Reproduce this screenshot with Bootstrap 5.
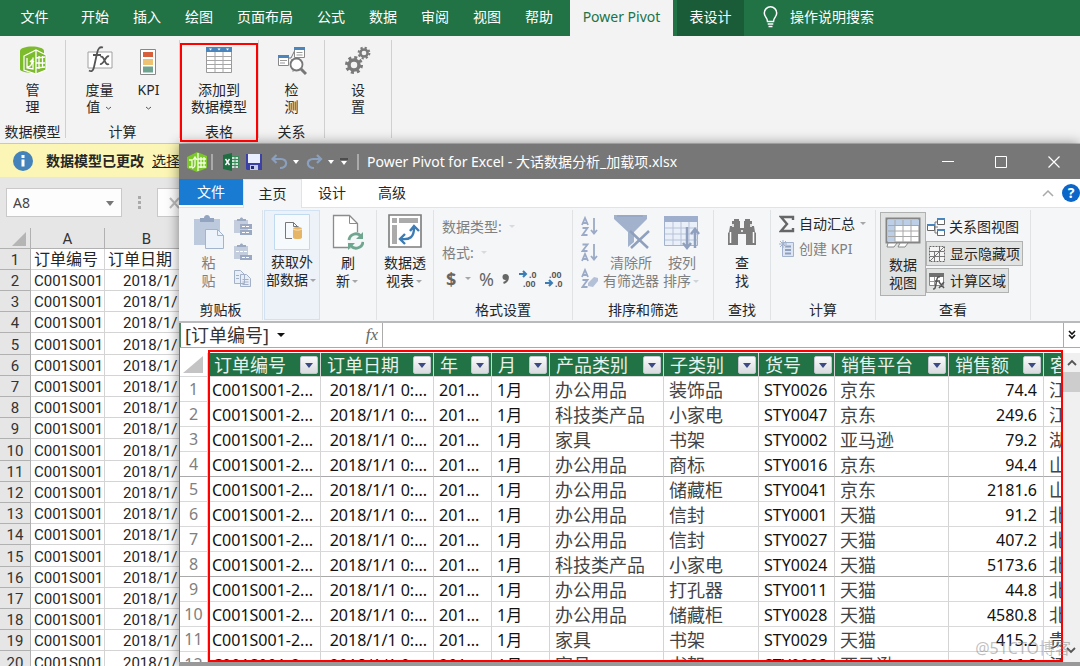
<!DOCTYPE html>
<html lang="zh-CN">
<head>
<meta charset="utf-8">
<meta name="viewport" content="width=device-width, initial-scale=1">
<title>Power Pivot for Excel</title>
<link href="https://cdn.jsdelivr.net/npm/bootstrap@5.3.0/dist/css/bootstrap.min.css" rel="stylesheet">
<style>
  body { font: 14px/18px "Noto Sans", "Noto Sans CJK SC", sans-serif; color: #262626; background: #e6e6e6; }
  button { font: inherit; color: inherit; background: none; border: 0; padding: 0; }
  button, a, .nowrap { white-space: nowrap; }
  svg { display: block; flex: none; }
  .xl-tabs { background: #217346; height: 36px; color: #fff; }
  .xl-tabs button { padding: 0 12px 2px; }
  .xl-tabs .xl-file { width: 69px; }
  .xl-tabs .xl-on { background: #f3f3f3; color: #217346; width: 103px; margin: 0 4px 0 5px; }
  .xl-tabs .xl-ctx { background: #1b5c38; width: 67px; }
  .xl-ribbon { background: #f3f3f3; height: 108px; border-bottom: 1px solid #c8c8c8; }
  .xl-group { border-right: 1px solid #d0d0d0; height: 98px; margin-top: 4px; position: relative; text-align: center; }
  .xl-group button { line-height: 17px; }
  .xl-group button svg { margin: 4px auto 5px; }
  .xl-group .xl-label { line-height: 18px; margin-bottom: -3px; }
  .frame-red { position: absolute; inset: 3px 0 -4px 0; border: 2px solid #f00; z-index: 5; pointer-events: none; }
  .work { min-height: 0; }
  .sheet { width: 179px; }
  .msg { background: #fbf6b5; height: 33px; padding-left: 13px; }
  .msg strong { margin: 0 8px 0 13px; }
  .namebox { height: 51px; padding-left: 6px; }
  .namebox .box { background: #fdfdfd; border: 1px solid #c9c9c9; height: 29px; }
  .namebox input { width: 92px; border: 0; background: none; color: #444; }
  .sheet-table { table-layout: fixed; width: 189px; border-collapse: separate; border-spacing: 0; font: 15px/18px Roboto, "Noto Sans CJK SC", sans-serif; }
  .sheet-table th, .sheet-table td { padding: 2px 0 0; overflow: hidden; white-space: nowrap; height: 21px; border-right: 1px solid #d4d4d4; border-bottom: 1px solid #d4d4d4; }
  .sheet-table tbody tr:nth-child(5n) > * { height: 22px; }
  .sheet-table th { background: #e6e6e6; font-weight: 400; text-align: center; border-color: #b1b1b1; color: #333; }
  .sheet-table td { background: #fff; padding-left: 3px; }
  .sheet-table td + td { padding-left: 18px; }
  .sheet-table tr:first-child td { font-size: 16px; padding-left: 3px; }
  .pp { box-shadow: 0 0 12px rgba(0,0,0,.45); position: relative; z-index: 2; min-width: 0; padding-bottom: 4px; background: #999; }
  .pp-title { background: #777; color: #fff; height: 35px; }
  .pp-name { margin-left: 8px; }
  .bar-sep { width: 2px; height: 16px; background: #aaa; }
  .win-btn { width: 53px; }
  .pp-tabs { background: #fff; height: 29px; border-bottom: 1px solid #e1e3e6; }
  .pp-tabs button { width: 60px; }
  .pp-tabs .pp-file { background: #197cd2; color: #fff; width: 64px; height: 26px; }
  .pp-tabs .pp-on { background: #f4f6f8; border: 1px solid #e1e3e6; border-bottom: 0; width: 59px; height: 29px; }
  .pp-ribbon { background: #f4f6f8; height: 115px; border-bottom: 2px solid #b8babc; padding-top: 2px; }
  .pp-group { border-right: 1px solid #e0e3e6; height: 110px; }
  .pp-group .pp-body { height: 91px; padding-top: 4px; }
  .pp-group .big svg { margin: 0 auto; }
  .big { text-align: center; align-self: flex-start; }
  .big .ico { height: 40px; }
  .off { color: #808080; }
  .hot { background: #edf2f8; border: 1px solid #d0e2f3; width: 56px; height: 110px; margin-left: 1px; padding-top: 2px; }
  .hot .ico svg { margin-top: -3px; }
  .toggled { background: #e1e3e3; border: 1px solid #b0b2b2; }
  .view-big { width: 46px; height: 84px; margin-top: -2px; }
  .view-row { height: 25px; padding: 0 2px 0 1px; }
  .stack > * { height: 26px; }
  .pp-fx { background: #fff; height: 25px; border-bottom: 1px solid #ababab; border-left: 2px solid #4b8763; }
  .pp-fx .field { width: 202px; border-right: 1px solid #ababab; }
  .pp-fx .field .nowrap { font-size: 18px; color: #333; }
  .pp-fx input { border: 0; outline: 0; min-width: 0; }
  .fx { font: italic 17px/22px "Liberation Serif", serif; color: #666; }
  .pp-more { width: 17px; border-left: 1px solid #ababab; }
  .pp-data { background: #fff; min-height: 0; padding-top: 5px; border-left: 1px solid #4b8763; position: relative; }
  .data-table { table-layout: fixed; width: 100%; border-collapse: separate; border-spacing: 0; font: 16px/22px "Noto Sans", "Noto Sans CJK SC", sans-serif; color: #111; }
  .data-table th, .data-table td { padding: 1px 4px 0 5px; height: 25px; overflow: hidden; white-space: nowrap; border-right: 1px solid #d4d4d4; border-bottom: 1px solid #d9d9d9; }
  .data-table td:nth-child(2) { padding-left: 4px; }
  .data-table tbody tr:nth-child(4n) > * { border-bottom: 1px solid #aaa; }
  .data-table thead th { background: #217346; color: #e9f1ec; height: 24px; font-weight: 400; font-size: 18px; padding: 0 2px 0 6px; }
  .data-table .rownum { background: #fff; color: #808080; font-weight: 400; text-align: center; padding: 0; }
  .data-table .zh { font-size: 18px; color: #444; }
  .data-table .num { text-align: right; padding-right: 6px; }
  .filter-btn { width: 18px; height: 18px; background: linear-gradient(#fafafa, #d9dbe0); border: 1px solid #c3c6cf; border-radius: 2px; }
  .frame-data { position: absolute; left: 28px; right: 17px; top: 2px; bottom: 0; border: 2px solid #f00; pointer-events: none; }
  .vscroll { width: 17px; background: #f0f0f0; }
  .vscroll .thumb { height: 20px; background: #cdcdcd; }
  .watermark { position: absolute; right: 9px; bottom: 5px; font-size: 16px; color: rgba(130,130,130,.5); }
</style>
</head>
<body class="vh-100 overflow-hidden d-flex flex-column">

<nav class="xl-tabs d-flex flex-shrink-0 align-items-stretch">
  <button class="xl-file">文件</button><button>开始</button><button>插入</button><button>绘图</button><button>页面布局</button><button>公式</button><button>数据</button><button>审阅</button><button>视图</button><button>帮助</button>
  <button class="xl-on">Power Pivot</button>
  <button class="xl-ctx">表设计</button>
  <button class="d-flex align-items-center gap-2 ms-1">
    <svg width="22" height="24" viewBox="0 0 22 24" fill="none" stroke="#fff" stroke-width="1.5"><path d="M7.500 16.500c0-4-3.200-4.200-3.200-8.500a6 6 0 0 1 12.400 0c0 4.300-3.200 4.500-3.200 8.500zM7.700 19h5.600M8.500 21.500h4"/></svg>
    操作说明搜索</button>
</nav>

<header class="xl-ribbon d-flex flex-shrink-0">
  <div class="xl-group d-flex flex-column justify-content-between" style="width:66px">
    <button><svg width="28" height="32" viewBox="0 0 28 32"><path d="M1 7c0-6 24-6 24 0v18c0 5-24 5-24 0z" fill="#7cbb2b"/><path d="M5 12l12-6 10 5v15l-10 4-12-4z" fill="#7cbb2b" stroke="#fff" stroke-width="1.200"/><path d="M17 6v24M20 12v13M23.500 12v12M17 14l9-1M17 19h9M17 24l9-1" stroke="#fff" fill="none" stroke-width="1.300"/><path d="M8 14v10l6 1V13.500M8 23c4 0 5-2 5-6m-2 1l2-2 2 2" stroke="#fff" fill="none" stroke-width="1.300"/></svg>管<br>理</button>
    <div class="xl-label nowrap">数据模型</div>
  </div>
  <div class="xl-group d-flex flex-column justify-content-between" style="width:114px">
    <div class="d-flex justify-content-center gap-4">
      <button><svg width="28" height="32" viewBox="0 0 28 32"><path d="M2 8h24v16H2z" fill="#fff" stroke="#a0a0a0"/><path d="M17 3.500c-3.500-1-5 1-6 6L8 23c-.8 4-2.500 5-5 3.500M7 11h8" fill="none" stroke="#555" stroke-width="1.800"/><path d="M14.500 13c4-2.500 4 9.500 8.500 7M23 12.500c-3-2-5 8.500-9 7.500" fill="none" stroke="#555" stroke-width="1.800"/></svg>度量<br>值 <svg class="d-inline m-0" width="9" height="8" viewBox="0 0 9 8"><path d="M2 3l2.500 2L7 3" fill="none" stroke="#555"/></svg></button>
      <button><svg width="18" height="32" viewBox="0 0 18 32"><path d="M1.500 5.500h15v25h-15z" fill="#fff" stroke="#888"/><path d="M4 8h10v5H4z" fill="#d65f3c"/><path d="M4 15h10v6H4z" fill="#edc373"/><path d="M4 22.500h10v6H4z" fill="#6ea390"/></svg>KPI<br><svg class="d-inline m-0" width="9" height="8" viewBox="0 0 9 8"><path d="M2 3l2.500 2L7 3" fill="none" stroke="#555"/></svg></button>
    </div>
    <div class="xl-label">计算</div>
  </div>
  <div class="xl-group d-flex flex-column justify-content-between" style="width:79px">
    <button><svg width="28" height="32" viewBox="0 0 28 32"><path d="M1.500 4.500h25v24h-25z" fill="#fff" stroke="#9a9a9a"/><path d="M1 3h26v5H1z" fill="#4a86bd"/><path d="M4 4.500h3l-1.500 2zM12.500 4.500h3l-1.500 2zM21 4.500h3l-1.500 2z" fill="#fff"/><path d="M2 12.500h24M2 16.500h24M2 20.500h24M2 24.500h24M10 8v20M18 8v20" stroke="#a6a6a6"/></svg>添加到<br>数据模型</button>
    <div class="xl-label">表格</div>
    <span class="frame-red"></span>
  </div>
  <div class="xl-group d-flex flex-column justify-content-between" style="width:66px">
    <button><svg width="30" height="32" viewBox="0 0 30 32"><path d="M11 14h3l4-8M14 16h6" stroke="#777" fill="none"/><path d="M1.500 11.500h10v10h-10zM17.500 3.500h10v10h-10z" fill="#fff" stroke="#888"/><path d="M1 11h11v3H1zM17 3h11v3H17z" fill="#4a86bd"/><path d="M3 16.500h7M3 19h5M19.500 8.500h6M19.500 11h6" stroke="#999"/><path d="M16 28v-8h9" stroke="#999" fill="none"/><circle cx="19.500" cy="20.500" r="6" fill="#fff" stroke="#777" stroke-width="1.800"/><path d="M24 25l5 5" stroke="#777" stroke-width="3"/></svg>检<br>测</button>
    <div class="xl-label">关系</div>
  </div>
  <div class="xl-group d-flex flex-column" style="width:67px">
    <button><svg width="28" height="32" viewBox="0 0 28 32" fill="none" stroke="#7a7a7a"><circle cx="10" cy="21" r="5" stroke-width="3.500"/><circle cx="10" cy="21" r="7.500" stroke-width="3" stroke-dasharray="3 2.890"/><circle cx="20" cy="9" r="3.600" stroke-width="2.500"/><circle cx="20" cy="9" r="5.400" stroke-width="2" stroke-dasharray="2.200 2.040"/></svg>设<br>置</button>
  </div>
</header>

<main class="work d-flex flex-grow-1">
  <section class="sheet flex-shrink-0 overflow-hidden">
    <div class="msg d-flex align-items-center">
      <svg width="20" height="20" viewBox="0 0 20 20"><circle cx="10" cy="10" r="10" fill="#4382ba"/><path d="M8.500 8.500h3v7h-3zM8.500 4h3v3h-3z" fill="#fff"/></svg>
      <strong class="nowrap">数据模型已更改</strong>
      <a href="#" class="text-reset">选择</a>
    </div>
    <div class="namebox d-flex align-items-center">
      <div class="box d-flex align-items-center px-1">
        <input aria-label="名称框" value="A8">
        <svg width="14" height="10" viewBox="0 0 14 10"><path d="M3 3h8l-4 5z" fill="#777"/></svg>
      </div>
      <svg class="mx-3" width="3" height="14" viewBox="0 0 3 14" fill="#aaa"><path d="M0 0h3v3H0zM0 5h3v3H0zM0 10h3v3H0z"/></svg>
      <div class="box flex-grow-1 border-end-0 d-flex align-items-center justify-content-end"><svg width="10" height="14" viewBox="0 0 10 14"><path d="M1 2l9 10M1 12l9-10" stroke="#bbb" stroke-width="2"/></svg></div>
    </div>
    <table class="sheet-table">
      <colgroup><col style="width:31px"><col style="width:74px"><col></colgroup>
      <thead><tr><th><svg class="ms-auto me-1" width="14" height="14" viewBox="0 0 14 14"><path d="M14 0v14H0z" fill="#b5b5b5"/></svg></th><th>A</th><th>B</th></tr></thead>
      <tbody id="sheetRows"></tbody>
    </table>
  </section>

  <section class="pp flex-grow-1 d-flex flex-column">
    <div class="pp-title d-flex align-items-center flex-shrink-0">
      <svg class="ms-2" width="20" height="20" viewBox="0 0 20 20"><path d="M0 5l10-5 10 4v12l-10 4L0 16z" fill="#7cc729"/><path d="M11 1v18M14 5v11M17 5v10M11 7h8M11 11h8M11 15h8M2 8h3v7H2M8 5v8c0 2-2 3-3 3M6 8l2-3 2 3" stroke="#f2ffe0" fill="none" stroke-width="1.300"/></svg>
      <span class="bar-sep ms-1"></span>
      <svg class="ms-2" width="20" height="18" viewBox="0 0 20 18"><path d="M8 3h10v12H8z" fill="#3c8a5c"/><path d="M11 5h6M11 8h6M11 11h6M11 14h6" stroke="#fff" stroke-width="1.500" stroke-dasharray="2.500 1"/><path d="M2 2l9-2v18l-9-2z" fill="#1d6e40"/><path d="M4.500 6l4 6M8.500 6l-4 6" stroke="#fff" stroke-width="1.400"/></svg>
      <svg class="ms-1" width="18" height="18" viewBox="0 0 18 18"><path d="M1 1h16v16H2l-1-1z" fill="#3c41a5"/><path d="M3 1h12v9H3z" fill="#e9efff"/><path d="M5 12h8v5H5z" fill="#c5cbea"/><path d="M6 13h3v3H6z" fill="#222a70"/></svg>
      <button class="d-flex align-items-center ms-2" aria-label="撤消"><svg width="17" height="16" viewBox="0 0 17 16"><path d="M5.500 1L1.500 5l4 4M2 5h8c7 0 7 9-1 9" fill="none" stroke="#8ba0be" stroke-width="2.200"/></svg><svg class="ms-1" width="8" height="6" viewBox="0 0 8 6"><path d="M1 1h6L4 5z" fill="#fff"/></svg></button>
      <button class="d-flex align-items-center ms-1" aria-label="恢复"><svg width="19" height="16" viewBox="1 0 19 16"><path d="M14 1l4 4-4 4M18 5h-8c-7 0-7 9 1 9" fill="none" stroke="#8ba0be" stroke-width="2.200"/></svg><svg class="ms-1" width="8" height="6" viewBox="0 0 8 6"><path d="M1 1h6L4 5z" fill="#fff"/></svg></button>
      <svg class="ms-1 me-2" width="10" height="8" viewBox="0 0 10 8"><path d="M1 1h8" stroke="#222"/><path d="M2 3h6L5 7z" fill="#fff"/></svg>
      <span class="bar-sep"></span>
      <span class="nowrap pp-name">Power Pivot for Excel - 大话数据分析_加载项.xlsx</span>
      <div class="ms-auto d-flex">
        <button class="win-btn" aria-label="最小化"><svg class="mx-auto" width="12" height="12" viewBox="0 0 12 12"><path d="M0 5.500h12" stroke="#fff"/></svg></button>
        <button class="win-btn" aria-label="最大化"><svg class="mx-auto" width="12" height="12" viewBox="0 0 12 12"><path d="M.5.500h11v11H.5z" fill="none" stroke="#fff"/></svg></button>
        <button class="win-btn" aria-label="关闭"><svg class="mx-auto" width="12" height="12" viewBox="0 0 12 12"><path d="M.5.500l11 11M11.500.500l-11 11" stroke="#fff" stroke-width="1.200"/></svg></button>
      </div>
    </div>

    <nav class="pp-tabs d-flex flex-shrink-0 align-items-start">
      <button class="pp-file">文件</button><button class="pp-on">主页</button><button class="h-100">设计</button><button class="h-100">高级</button>
      <div class="ms-auto d-flex align-items-center h-100 gap-2">
        <svg width="12" height="8" viewBox="0 0 12 8"><path d="M1 7l5-5 5 5" fill="none" stroke="#aaa" stroke-width="1.500"/></svg>
        <button class="rounded-circle fw-bold text-white" style="width:18px;background:#0a66c8">?</button>
      </div>
    </nav>

    <div class="pp-ribbon d-flex flex-shrink-0 overflow-hidden">
      <div class="pp-group off" style="width:84px">
        <div class="pp-body d-flex justify-content-center gap-2 ps-1">
          <button class="big"><span class="ico d-block"><svg width="32" height="36" viewBox="0 0 32 36"><path d="M1 5h26v26H1z" fill="#bdc9dc"/><path d="M7 8V4h4c0-4 6-4 6 0h4v4z" fill="#92a4c0"/><path d="M12.500 15.500h12l6 6v13h-18z" fill="#edf3fb" stroke="#a3b4ce"/><path d="M24.500 15.500v6h6" fill="none" stroke="#a3b4ce"/></svg></span>粘<br>贴</button>
          <div class="stack">
            <svg width="20" height="20" viewBox="0 0 20 20"><path d="M1 3h14v13H1z" fill="#c3cddd"/><path d="M4 4V2h3c0-2 3-2 3 0h3v2zM7 7h12v5H7zM7 13h12v5H7z" fill="#9baac2"/><path d="M9 9.500h8M9 15.500h8" stroke="#fff" stroke-dasharray="3 1"/></svg>
            <svg width="20" height="20" viewBox="0 0 20 20"><path d="M1 3h14v13H1z" fill="#c3cddd"/><path d="M4 4V2h3c0-2 3-2 3 0h3v2zM7 12h12v5H7z" fill="#9baac2"/><path d="M3 8.500h12M9 14.500h8" stroke="#fff" stroke-dasharray="3 1"/></svg>
            <svg width="20" height="20" viewBox="0 0 20 20" fill="#e8eef7" stroke="#a3b1c8"><path d="M1.500 1.500h6l4 4v9h-10zM7.500 5.500h6l4 4v8h-10z"/><path d="M9.500 10.500h6M9.500 13h6M9.500 15.500h6M3 6.500h3M3 9.500h3"/></svg>
          </div>
        </div>
        <div class="text-center text-body">剪贴板</div>
      </div>
      <div class="hot d-flex flex-column align-items-center">
        <button class="big align-self-center"><span class="ico d-block pt-1"><svg class="mx-auto" width="36" height="36" viewBox="0 0 36 36"><path d="M.5.500h35v35H.5z" fill="#f6fafd" stroke="#c0daf0"/><path d="M18 24.500h-6.500v-16h8l4 4M19.500 8.500v4h5" fill="none" stroke="#777"/><path d="M19 14.500v9c0 2 9 2 9 0v-9c0-2-9-2-9 0z" fill="#e6b566"/><path d="M19 15c2 1.500 7 1.500 9 0" stroke="#f7e3c0" fill="none"/></svg></span>获取外<br>部数据<svg class="d-inline" width="10" height="6" viewBox="0 0 10 6"><path d="M2 1h6L5 4z" fill="#a6a6a6"/></svg></button>
      </div>
      <div class="pp-group d-flex justify-content-center" style="width:57px"><div class="pp-body"><button class="big"><span class="ico d-block"><svg width="32" height="36" viewBox="0 0 32 36"><path d="M1.500 1.500h16l8 8v24h-24z" fill="#fff" stroke="#8c8c8c" stroke-width="1.300"/><path d="M17.500 1.500v8h8" fill="none" stroke="#8c8c8c"/><circle cx="24" cy="27" r="9" fill="#f4f6f8"/><path d="M17 26a7 7 0 0 1 12-4M31 28a7 7 0 0 1-12 4" fill="none" stroke="#6fa68f" stroke-width="2.800"/><path d="M31 18v7h-7zM16 36v-7h7z" fill="#6fa68f"/></svg></span>刷<br>新<svg class="d-inline" width="10" height="6" viewBox="0 0 10 6"><path d="M2 1h6L5 4z" fill="#a6a6a6"/></svg></button></div></div>
      <div class="pp-group d-flex justify-content-center" style="width:57px"><div class="pp-body"><button class="big"><span class="ico d-block"><svg width="34" height="36" viewBox="0 0 34 36"><path d="M1 1h32v32H1z" fill="#fff" stroke="#7c7c7c" stroke-width="1.600"/><path d="M4 4h5v5H4zM11 4h19v5H11zM4 11h5v19H4z" fill="#ababab"/><path d="M13 25c9 1 13-2 13-11M17 20l-5 5 5 5M22 17l4-5 5 5" fill="none" stroke="#3c7cb5" stroke-width="2.400"/></svg></span>数据透<br>视表<svg class="d-inline" width="10" height="6" viewBox="0 0 10 6"><path d="M2 1h6L5 4z" fill="#a6a6a6"/></svg></button></div></div>
      <div class="pp-group off" style="width:139px">
        <div class="pp-body stack ps-1">
          <button class="d-flex align-items-center ps-1">数据类型: <svg class="ms-1" width="12" height="6" viewBox="0 0 12 6"><path d="M3 1h6L6 4z" fill="#d8dade"/></svg></button>
          <button class="d-flex align-items-center ps-1">格式: <svg class="ms-1" width="12" height="6" viewBox="0 0 12 6"><path d="M3 1h6L6 4z" fill="#d8dade"/></svg></button>
          <div class="d-flex align-items-center justify-content-between px-2" style="font-size:18px;color:#666">
            <button class="fw-bold">$</button><svg width="8" height="6" viewBox="0 0 8 6"><path d="M1 1h6L4 4z" fill="#a6a6a6"/></svg><button>%</button>
            <button aria-label="千位分隔"><svg width="10" height="16" viewBox="0 0 10 16"><circle cx="4.500" cy="6" r="3" fill="#666"/><path d="M6.500 5c1 4-1 6-4 7" fill="none" stroke="#666" stroke-width="2"/></svg></button>
            <button aria-label="增加小数位数"><svg width="19" height="18" viewBox="0 0 19 18" font-family="Liberation Sans" font-size="9" font-weight="700" fill="#555"><text x="10" y="8">.0</text><text x="4" y="17">.00</text><path d="M0 4h7M4 1l3 3-3 3" stroke="#3c7cb5" stroke-width="2" fill="none"/></svg></button>
            <button aria-label="减少小数位数"><svg width="19" height="18" viewBox="0 0 19 18" font-family="Liberation Sans" font-size="9" font-weight="700" fill="#555"><text x="4" y="8">.00</text><text x="10" y="17">.0</text><path d="M0 13h7M4 10l3 3-3 3" stroke="#3c7cb5" stroke-width="2" fill="none"/></svg></button>
          </div>
        </div>
        <div class="text-center text-body">格式设置</div>
      </div>
      <div class="pp-group off" style="width:141px">
        <div class="pp-body d-flex ps-2 gap-1">
          <div class="stack">
            <svg width="18" height="20" viewBox="0 0 18 20" fill="none" stroke="#9baac6" stroke-width="1.800"><path d="M1 8l3-7 3 7M2 6h4M1.500 11h5l-5 7h5M13 1v15M10 13l3 3.500 3-3.500"/></svg>
            <svg width="18" height="20" viewBox="0 0 18 20" fill="none" stroke="#9baac6" stroke-width="1.800"><path d="M1.500 1.500h5l-5 6.500h5M1 18l3-7 3 7M2 16h4M13 1v15M10 13l3 3.500 3-3.500"/></svg>
            <svg width="18" height="20" viewBox="0 0 18 20" fill="none" stroke="#9baac6" stroke-width="1.800"><path d="M1 8l3-7 3 7M2 6h4M1.500 11h5l-5 7h5"/><path d="M7 14l6-6 4 1v3l-5 6-5-1z" fill="#b3c0d8" stroke="none"/></svg>
          </div>
          <button class="big"><span class="ico d-block"><svg width="38" height="36" viewBox="0 0 38 36"><path d="M2 1h33v4L22 18v10l-6 5V18L2 5z" fill="#a3b2cc"/><path d="M5 2h26" stroke="#8c9fbf"/><path d="M18 17l18 17M37 17L19 34" stroke="#8fa0be" stroke-width="2.500"/></svg></span>清除所<br>有筛选器</button>
          <button class="big"><span class="ico d-block"><svg width="38" height="36" viewBox="0 0 38 36"><path d="M1.500 2.500h33v29h-33z" fill="#eaf0f9" stroke="#a3b2cc"/><path d="M1 2h34v6H1z" fill="#9dafcc"/><path d="M2 14h33M2 20h33M2 26h33M10 8v23M18 8v23M26 8v23" stroke="#b5c2d8"/><path d="M24 13v20M20 29l4 5 4-5M32 34V15M28 20l4-5 4 5" fill="none" stroke="#8fa0be" stroke-width="2.500"/></svg></span>按列<br>排序<svg class="d-inline" width="10" height="6" viewBox="0 0 10 6"><path d="M2 1h6L5 4z" fill="#d0d3d8"/></svg></button>
        </div>
        <div class="text-center text-body">排序和筛选</div>
      </div>
      <div class="pp-group" style="width:57px">
        <div class="pp-body d-flex justify-content-center"><button class="big"><span class="ico d-block"><svg width="30" height="36" viewBox="0 0 30 36" fill="#7c7c7c"><path d="M5 7h2V5h5v2h1v7h4V7h1V5h5v2h2v5h2l1 6 1 1v12H19V20h-8v11H1V19l1-1 1-6h2z"/><path d="M3.500 18v11M26.500 18v11M6 10v3M24 10v3M14 17h2" stroke="#fff" stroke-width="1.500"/></svg></span>查<br>找</button></div>
        <div class="text-center">查找</div>
      </div>
      <div class="pp-group" style="width:105px">
        <div class="pp-body ps-2">
          <button class="d-flex align-items-center" style="height:20px"><svg class="me-1" width="16" height="18" viewBox="0 0 16 18"><path d="M14 5V2H2l6 7-6 7h12v-3" fill="none" stroke="#666" stroke-width="2.400"/></svg>自动汇总<svg class="ms-1" width="8" height="6" viewBox="0 0 8 6"><path d="M1 1h6L4 4z" fill="#a6a6a6"/></svg></button>
          <button class="d-flex align-items-center off mt-1" style="height:22px"><svg class="me-1" width="16" height="18" viewBox="0 0 16 18"><path d="M3.500 2.500h11v14h-11z" fill="#dce5f1" stroke="#a3b2cc"/><path d="M6 6.500h6M6 10h6M6 13.500h6" stroke="#8fa0be" stroke-width="2"/><path d="M0 4h8M4 0v8M1 1l6 6M7 1L1 7" stroke="#a3b2cc"/></svg>创建 KPI</button>
        </div>
        <div class="text-center">计算</div>
      </div>
      <div class="pp-group" style="width:155px">
        <div class="pp-body d-flex ps-1">
          <button class="big toggled view-big"><span class="ico d-block"><svg width="36" height="34" viewBox="0 0 36 34"><path d="M1.500 2.500h33v24h-33z" fill="#fff" stroke="#858585" stroke-width="2"/><path d="M3 4h31v5H3zM3 4h7v22H3z" fill="#bccfe6"/><path d="M3 9.500h31M3 15h31M3 20.500h31M10 4v22M18 4v22M26 4v22" stroke="#a8a8a8"/><path d="M3 27h9l-3 4H2zM15 27h8l-3 4h-7z" fill="#fff" stroke="#888"/></svg></span>数据<br>视图</button>
          <div class="d-flex flex-column align-items-start" style="gap:2px">
            <button class="view-row d-flex align-items-center gap-1"><svg width="18" height="20" viewBox="0 0 18 20"><path d="M8 10h3M8 10V5h3M8 10v6h3" stroke="#777" fill="none"/><path d="M.5 7.500h7v6h-7zM10.500 1.500h7v6h-7zM10.500 12.500h7v6h-7z" fill="#fff" stroke="#666"/><path d="M0 7h8v2H0zM10 1h8v2h-8zM10 12h8v2h-8z" fill="#4a86bd"/></svg>关系图视图</button>
            <button class="view-row toggled d-flex align-items-center gap-1"><svg width="18" height="20" viewBox="0 0 18 20"><path d="M1.500 2.500h15v15h-15z" fill="#f4f4f4" stroke="#666" stroke-dasharray="2 1"/><path d="M6.500 7v10M11.500 3v14M2 7.500h14M2 12.500h14M2 17L16 3" stroke="#777" fill="none"/></svg>显示隐藏项</button>
            <button class="view-row toggled d-flex align-items-center gap-1"><svg width="18" height="20" viewBox="0 0 18 20"><path d="M1.500 2.500h14v12h-14z" fill="#fff" stroke="#888"/><path d="M1 2h15v4H1z" fill="#707070"/><path d="M2 10.500h8M6.500 6v8" stroke="#999"/><path d="M12 6c-3-1-3 2-4 7s-1 5-3 5M7 10h5M11 11l5 6M16 11l-5 6" stroke="#555" stroke-width="1.500" fill="none"/></svg>计算区域</button>
          </div>
        </div>
        <div class="text-center">查看</div>
      </div>
    </div>

    <div class="pp-fx d-flex flex-shrink-0 align-items-stretch">
      <div class="field d-flex align-items-center ps-1 flex-shrink-0">
        <span class="nowrap">[订单编号]</span>
        <svg class="ms-2" width="8" height="6" viewBox="0 0 8 6"><path d="M0 1h8L4 5z" fill="#111"/></svg>
        <span class="fx ms-auto me-1">fx</span>
      </div>
      <input class="flex-grow-1" aria-label="编辑栏">
      <button class="pp-more" aria-label="展开"><svg class="mx-auto" width="8" height="10" viewBox="0 0 8 10"><path d="M1 1l3 3 3-3M1 5l3 3 3-3" fill="none" stroke="#111" stroke-width="1.600"/></svg></button>
    </div>

    <div class="pp-data d-flex flex-grow-1">
      <div class="flex-grow-1 overflow-hidden">
        <table class="data-table">
          <colgroup><col style="width:28px"><col style="width:113px"><col style="width:113px"><col style="width:58px"><col style="width:58px"><col style="width:114px"><col style="width:95px"><col style="width:76px"><col style="width:114px"><col style="width:95px"><col></colgroup>
          <thead><tr id="dataHead"><th class="rownum"><svg class="ms-auto me-1" width="20" height="17" viewBox="0 0 20 17"><path d="M20 0v17H0z" fill="#c4c4c4"/></svg></th></tr></thead>
          <tbody id="dataRows"></tbody>
        </table>
      </div>
      <div class="vscroll flex-shrink-0">
        <svg class="mx-auto my-1" width="10" height="11" viewBox="0 0 10 11"><path d="M1 8l4-4 4 4" fill="none" stroke="#555" stroke-width="1.800"/></svg>
        <div class="thumb"></div>
      </div>
      <span class="frame-data"></span>
      <svg class="position-absolute bottom-0 end-0 mb-2 me-1" width="10" height="8" viewBox="0 0 10 8"><path d="M1 2l4 4 4-4" fill="none" stroke="#555" stroke-width="1.800"/></svg>
      <span class="watermark">@51CTO博客</span>
    </div>
  </section>
</main>

<script>
  const sheet = document.getElementById('sheetRows');
  for (let i = 1; i <= 20; i++) {
    const cells = i === 1 ? ['订单编号', '订单日期'] : ['C001S001', '2018/1/'];
    sheet.insertAdjacentHTML('beforeend', `<tr><th>${i}</th><td>${cells[0]}</td><td>${cells[1]}</td></tr>`);
  }

  const arrow = '<svg class="mx-auto" width="8" height="6" viewBox="0 0 8 6"><path d="M0 1h8L4 6z" fill="#3b4a85"/></svg>';
  const head = ['订单编号', '订单日期', '年', '月', '产品类别', '子类别', '货号', '销售平台', '销售额', '客'];
  document.getElementById('dataHead').insertAdjacentHTML('beforeend', head.map((h, i) =>
    `<th><div class="d-flex align-items-center justify-content-between"><span>${h}</span>${i < 9 ? `<button class="filter-btn" aria-label="筛选${h}">${arrow}</button>` : ''}</div></th>`).join(''));

  const rows = [
    ['办公用品', '装饰品', 'STY0026', '京东', '74.4', '江'],
    ['科技类产品', '小家电', 'STY0047', '京东', '249.6', '江'],
    ['家具', '书架', 'STY0002', '亚马逊', '79.2', '湖'],
    ['办公用品', '商标', 'STY0016', '京东', '94.4', '山'],
    ['办公用品', '储藏柜', 'STY0041', '京东', '2181.6', '山'],
    ['办公用品', '信封', 'STY0001', '天猫', '91.2', '北'],
    ['办公用品', '信封', 'STY0027', '天猫', '407.2', '北'],
    ['科技类产品', '小家电', 'STY0024', '天猫', '5173.6', '北'],
    ['办公用品', '打孔器', 'STY0011', '天猫', '44.8', '北'],
    ['办公用品', '储藏柜', 'STY0028', '天猫', '4580.8', '北'],
    ['家具', '书架', 'STY0029', '天猫', '415.2', '贵'],
    ['家具', '书架', 'STY0038', '亚马逊', '1016.8', '江']
  ];
  document.getElementById('dataRows').innerHTML = rows.map((r, i) =>
    `<tr><th class="rownum">${i + 1}</th><td>C001S001-2...</td><td class="num">2018/1/1 0:...</td><td>201...</td><td>1月</td>` +
    `<td class="zh">${r[0]}</td><td class="zh">${r[1]}</td><td>${r[2]}</td><td class="zh">${r[3]}</td><td class="num">${r[4]}</td><td class="zh">${r[5]}</td></tr>`).join('');
</script>
<script src="https://cdn.jsdelivr.net/npm/bootstrap@5.3.0/dist/js/bootstrap.bundle.min.js"></script>
</body>
</html>
